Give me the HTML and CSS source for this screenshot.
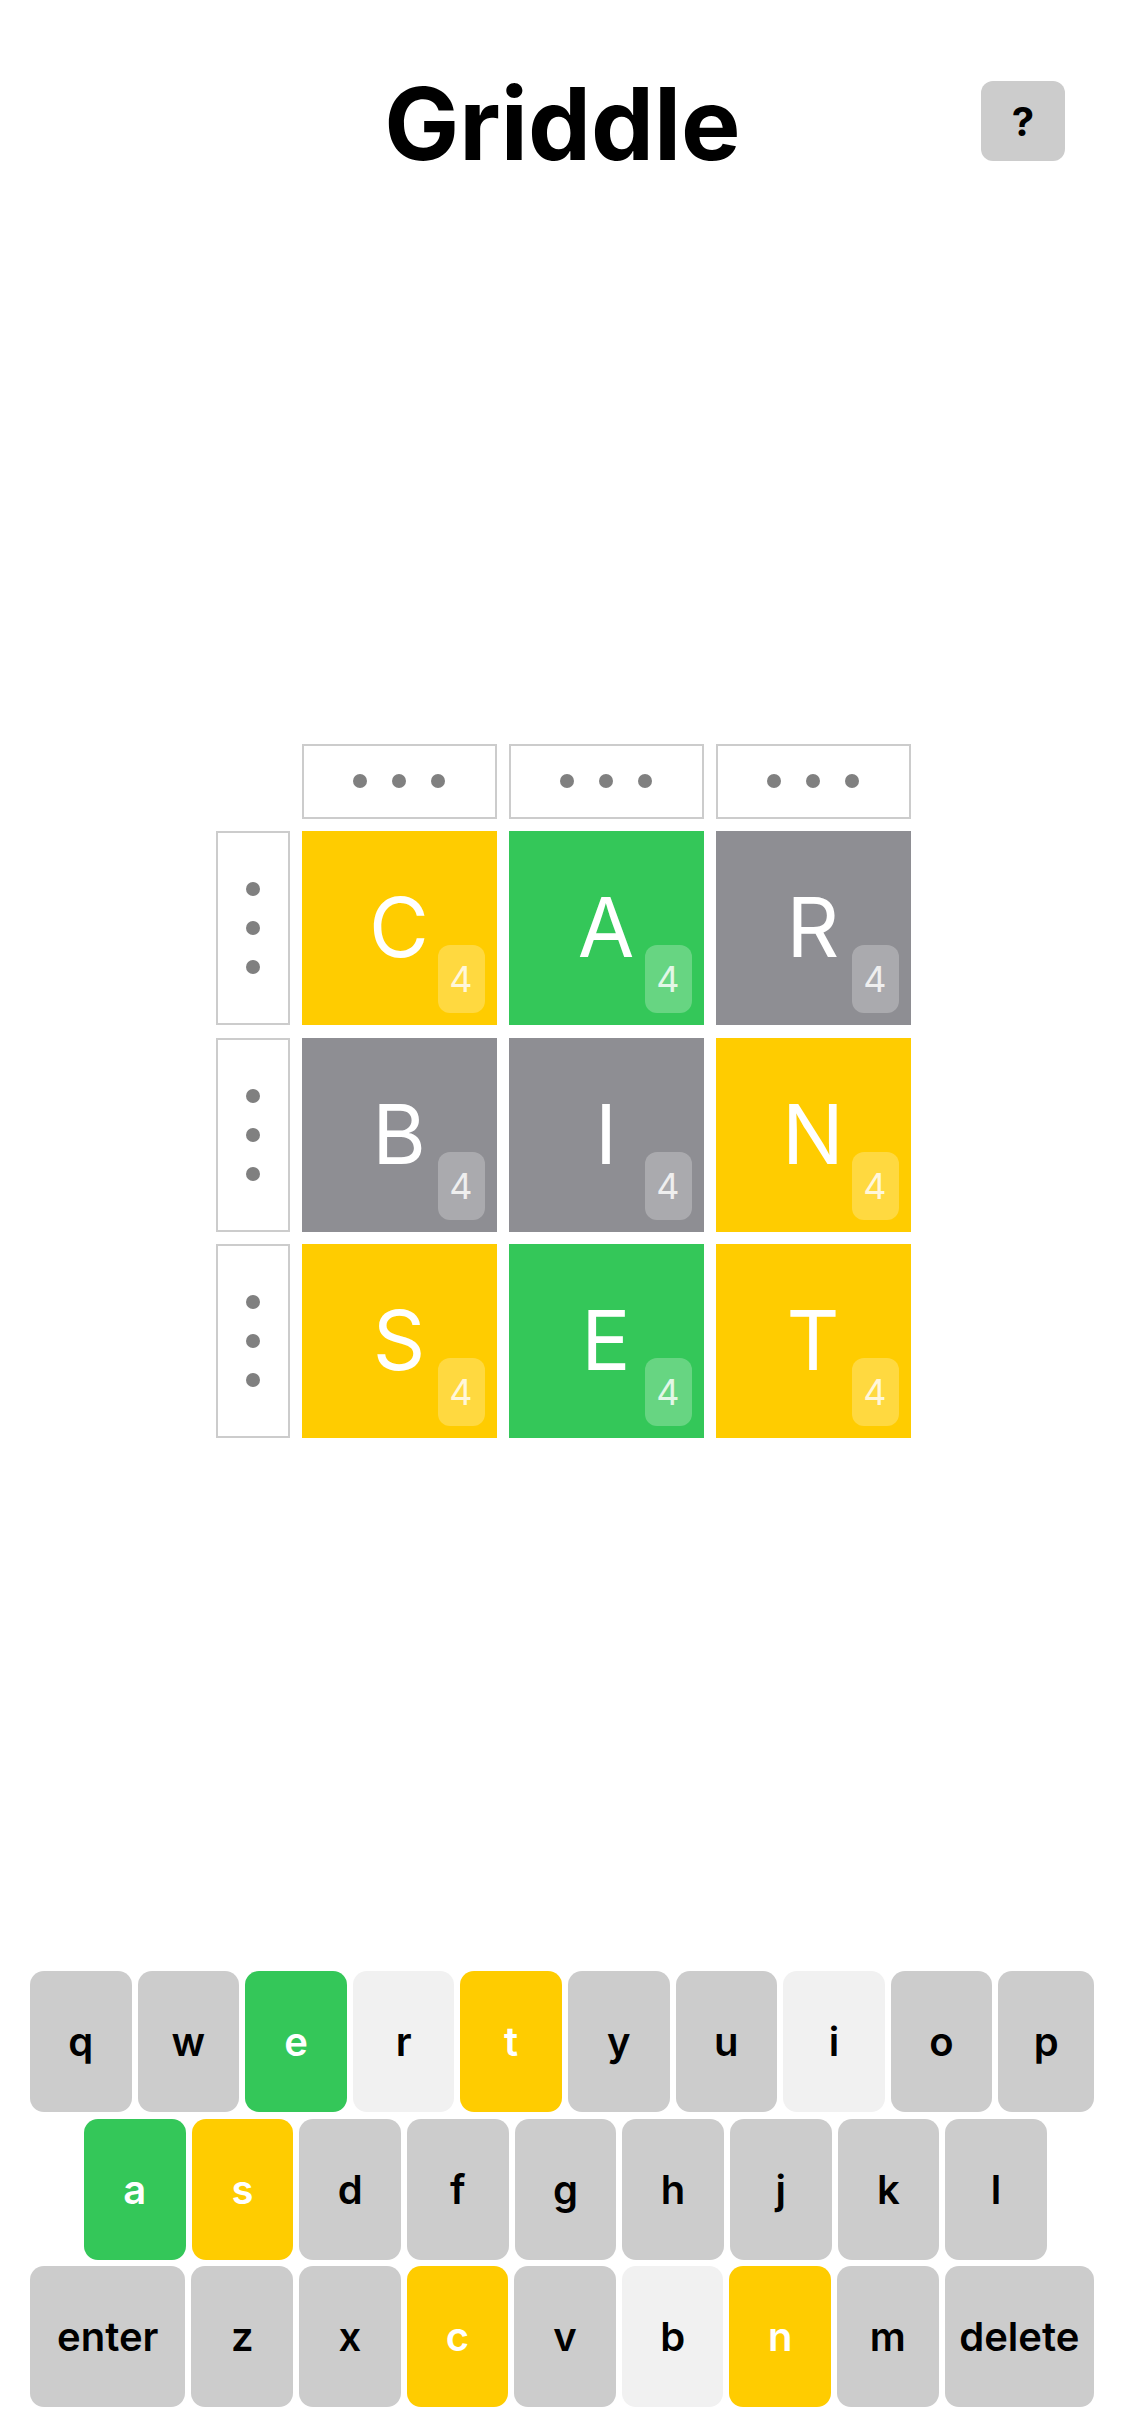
FILE: index.html
```html
<!DOCTYPE html>
<html lang="en">
<head>
<meta charset="utf-8">
<title>Griddle</title>
<link rel="stylesheet" href="styles.css">
</head>
<body>
<div class="app">
  <header class="header">
    <h1 class="title">Griddle</h1>
    <button class="help">?</button>
  </header>
  <main class="board-area">
    <div class="board">
      <div class="corner"></div>
      <div class="clue clue-col"><span class="dot"></span><span class="dot"></span><span class="dot"></span></div>
      <div class="clue clue-col"><span class="dot"></span><span class="dot"></span><span class="dot"></span></div>
      <div class="clue clue-col"><span class="dot"></span><span class="dot"></span><span class="dot"></span></div>

      <div class="clue clue-row"><span class="dot"></span><span class="dot"></span><span class="dot"></span></div>
      <div class="tile present">C<span class="badge">4</span></div>
      <div class="tile correct">A<span class="badge">4</span></div>
      <div class="tile absent">R<span class="badge">4</span></div>

      <div class="clue clue-row"><span class="dot"></span><span class="dot"></span><span class="dot"></span></div>
      <div class="tile absent">B<span class="badge">4</span></div>
      <div class="tile absent">I<span class="badge">4</span></div>
      <div class="tile present">N<span class="badge">4</span></div>

      <div class="clue clue-row"><span class="dot"></span><span class="dot"></span><span class="dot"></span></div>
      <div class="tile present">S<span class="badge">4</span></div>
      <div class="tile correct">E<span class="badge">4</span></div>
      <div class="tile present">T<span class="badge">4</span></div>
    </div>
  </main>
  <div class="keyboard">
    <div class="kb-row">
      <button class="key">q</button>
      <button class="key">w</button>
      <button class="key k-correct">e</button>
      <button class="key k-unused">r</button>
      <button class="key k-present">t</button>
      <button class="key">y</button>
      <button class="key">u</button>
      <button class="key k-unused">i</button>
      <button class="key">o</button>
      <button class="key key-last">p</button>
    </div>
    <div class="kb-row">
      <div class="spacer-left"></div>
      <button class="key k-correct">a</button>
      <button class="key k-present">s</button>
      <button class="key">d</button>
      <button class="key">f</button>
      <button class="key">g</button>
      <button class="key">h</button>
      <button class="key">j</button>
      <button class="key">k</button>
      <button class="key">l</button>
      <div class="spacer-right"></div>
    </div>
    <div class="kb-row">
      <button class="key key-enter">enter</button>
      <button class="key">z</button>
      <button class="key">x</button>
      <button class="key k-present">c</button>
      <button class="key">v</button>
      <button class="key k-unused">b</button>
      <button class="key k-present">n</button>
      <button class="key">m</button>
      <button class="key key-delete">delete</button>
    </div>
  </div>
</div>
</body>
</html>
```

FILE: styles.css
```css
* {
  box-sizing: border-box;
}

html, body {
  margin: 0;
  padding: 0;
  background: #ffffff;
}

body {
  font-family: Inter, "Noto Sans", "Liberation Sans", sans-serif;
  color: #000000;
}

.app {
  display: flex;
  flex-direction: column;
  height: 2436px;
  width: 1125px;
}

/* Header */
.header {
  height: 211px;
  flex: none;
  display: grid;
  grid-template-columns: 1fr auto 1fr;
  align-items: start;
}

.title {
  grid-column: 2;
  margin: 73.5px 0 0 0;
  font-size: 100px;
  line-height: 1;
  font-weight: 700;
}

.help {
  grid-column: 3;
  justify-self: end;
  margin: 81px 60px 0 0;
  width: 84px;
  height: 80px;
  border: none;
  border-radius: 12px;
  background: #cccccc;
  font-family: Inter, "Noto Sans", sans-serif;
  font-size: 40px;
  font-weight: 700;
  color: #000000;
  padding: 0;
  display: flex;
  align-items: center;
  justify-content: center;
}

/* Board */
.board-area {
  flex: 1;
  display: flex;
  align-items: center;
  justify-content: center;
}

.board {
  display: grid;
  grid-template-columns: 74px repeat(3, 195px);
  grid-template-rows: 75px repeat(3, 194px);
  column-gap: 12px;
  row-gap: 12.5px;
  margin-left: 1px;
}

.clue {
  border: 2px solid #cccccc;
  background: #ffffff;
  display: flex;
  align-items: center;
  justify-content: center;
  gap: 25px;
}

.clue-row {
  flex-direction: column;
}

.dot {
  width: 14px;
  height: 14px;
  border-radius: 50%;
  background: #808080;
}

.tile {
  position: relative;
  display: flex;
  align-items: center;
  justify-content: center;
  color: #ffffff;
  font-size: 82px;
  font-weight: 400;
  line-height: 1;
}

.present { background: #ffcc00; }
.correct { background: #34c759; }
.absent { background: #8e8e93; }

.badge {
  position: absolute;
  right: 12px;
  bottom: 12px;
  width: 47px;
  height: 68px;
  border-radius: 12px;
  background: rgba(255, 255, 255, 0.25);
  color: rgba(255, 255, 255, 0.82);
  font-size: 36px;
  font-weight: 400;
  display: flex;
  align-items: center;
  justify-content: center;
}

/* Keyboard */
.keyboard {
  flex: none;
  display: flex;
  flex-direction: column;
  gap: 6.5px;
  padding: 0 31px 29px 30px;
}

.kb-row {
  display: flex;
  gap: 6px;
  height: 141px;
}

.key {
  flex: 1 1 0;
  min-width: 0;
  border: none;
  border-radius: 14px;
  background: #cccccc;
  color: #000000;
  font-family: Inter, "Noto Sans", sans-serif;
  font-size: 40px;
  font-weight: 600;
  padding: 0;
  display: flex;
  align-items: center;
  justify-content: center;
}

.k-correct { background: #34c759; color: #ffffff; }
.k-present { background: #ffcc00; color: #ffffff; }
.k-unused { background: #f1f1f1; }

.key-last { flex: 0.941 1 0; }
.key-enter { flex: 1.53 1 0; }
.key-delete { flex: 1.47 1 0; }

.spacer-left { flex: 0.472 1 0; }
.spacer-right { flex: 0.404 1 0; }
```
